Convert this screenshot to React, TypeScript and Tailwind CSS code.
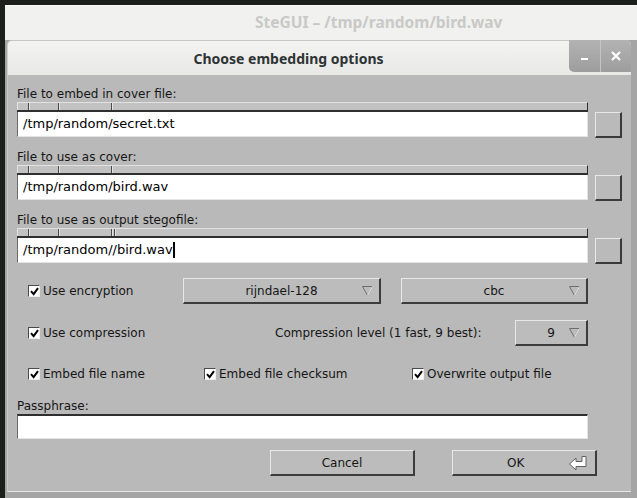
import React from 'react';

const Ruler: React.FC<{ extra?: boolean }> = ({ extra }) => (
  <div className="flex h-[10px] bg-[#c2c2c2] border-t border-t-[#e2e2e2] border-b-2 border-b-[#2f2f2f] border-r border-r-[#2f2f2f]">
    <div className="w-[12px] border-l border-l-[#e2e2e2] border-r border-r-[#4a4a4a]" />
    <div className="w-[30px] border-l border-l-[#e2e2e2] border-r border-r-[#4a4a4a]" />
    <div className="w-[53px] border-l border-l-[#e2e2e2] border-r border-r-[#4a4a4a]" />
    {extra && <div className="w-[3px] border-l border-l-[#e2e2e2] border-r border-r-[#4a4a4a]" />}
    <div className="flex-1 border-l border-l-[#e2e2e2]" />
  </div>
);

const Entry: React.FC<{ value?: string; cursor?: boolean }> = ({ value, cursor }) => (
  <div className="h-[25px] flex items-center bg-white pl-[5px] text-[13px] text-black border-l border-l-[#6a6a6a] border-r border-r-[#e4e4e4] border-b border-b-[#e4e4e4]">
    <span>{value}</span>
    {cursor && <span className="w-[2px] h-[16px] bg-black" />}
  </div>
);

const SquareButton: React.FC = () => (
  <div className="w-[27px] h-[26px] bg-[#bababa] border-t border-l border-t-[#e8e8e8] border-l-[#e8e8e8] border-b-2 border-r-2 border-b-[#3a3a3a] border-r-[#3a3a3a]" />
);

const FileGroup: React.FC<{ label: string; value: string; extra?: boolean; cursor?: boolean }> = ({
  label,
  value,
  extra,
  cursor,
}) => (
  <div className="flex gap-[7px]">
    <div className="w-[571px] flex flex-col">
      <div className="h-[15px] leading-[15px] text-[12px]">{label}</div>
      <Ruler extra={extra} />
      <Entry value={value} cursor={cursor} />
    </div>
    <div className="pt-[25px]">
      <SquareButton />
    </div>
  </div>
);

const Check: React.FC<{ label: string }> = ({ label }) => (
  <div className="flex items-center gap-[3px]">
    <div className="w-[12px] h-[12px] bg-white flex items-center justify-center border-t border-l border-t-[#4a4a4a] border-l-[#4a4a4a] border-b border-r border-b-[#eeeeee] border-r-[#eeeeee]">
      <svg width="9" height="9" viewBox="0 0 9 9">
        <path d="M1 4.2 L3.6 7.2 L8 1.2" stroke="#000" strokeWidth="2" fill="none" />
      </svg>
    </div>
    <span>{label}</span>
  </div>
);

const Triangle: React.FC = () => (
  <svg width="11" height="10" viewBox="0 0 11 10">
    <path d="M0.5 0.5 L10.5 0.5 L5.5 9.5 Z" fill="none" stroke="#6e6e6e" strokeWidth="1" />
    <path d="M10.5 0.5 L5.5 9.5" stroke="#f2f2f2" strokeWidth="1" />
  </svg>
);

const Combo: React.FC<{ value: string; w: string }> = ({ value, w }) => (
  <div
    className={`${w} h-[26px] flex items-center pl-[17px] pr-[6px] bg-[#bcbcbc] border-t border-l border-t-[#e8e8e8] border-l-[#e8e8e8] border-b-2 border-r-2 border-b-[#3c3c3c] border-r-[#3c3c3c]`}
  >
    <span className="flex-1 text-center">{value}</span>
    <Triangle />
  </div>
);

const PushButton: React.FC<{ children: React.ReactNode; className?: string }> = ({ children, className }) => (
  <div
    className={`w-[145px] h-[26px] flex items-center bg-[#bcbcbc] border-t border-l border-t-[#e8e8e8] border-l-[#e8e8e8] border-b-2 border-r-2 border-b-[#3c3c3c] border-r-[#3c3c3c] ${className ?? ''}`}
  >
    {children}
  </div>
);

export default function App() {
  return (
    <div className="w-[637px] h-[498px] overflow-hidden bg-[#1d1f1d] pt-[5px] pl-[5px] font-['DejaVu_Sans',sans-serif] text-[12px] text-[#161616]">
      <div className="h-full flex flex-col bg-[#a5a5a5]">
        {/* main window title */}
        <div className="h-[35px] shrink-0 flex items-center pl-[250px] bg-[#f1f1ef] border-t border-t-[#fbfbfb] font-['Noto_Sans',sans-serif] text-[15.5px] font-bold text-[#c9c9c7]">
          SteGUI – /tmp/random/bird.wav
        </div>

        {/* dialog */}
        <div className="ml-[2px] mr-[6px] flex flex-col">
          <div className="h-[35px] flex rounded-t-[5px] bg-gradient-to-b from-[#f3f3f1] to-[#e8e8e6] border-t border-t-[#c6c6c4] border-l border-l-[#d0d0ce]">
            <div className="flex-1 flex items-center justify-center font-['Noto_Sans',sans-serif] text-[14px] font-bold text-[#2e3436]">
              Choose embedding options
            </div>
            <div className="flex h-[32px] -mt-px rounded-bl-[5px] rounded-tr-[5px] overflow-hidden bg-gradient-to-b from-[#b3b3b3] to-[#9d9d9d]">
              <div className="w-[31px] flex items-center justify-center pt-[6px]">
                <div className="w-[7px] h-[2px] bg-white" />
              </div>
              <div className="w-[31px] flex items-center justify-center border-l border-l-[#c4c4c4]">
                <svg width="10" height="10" viewBox="0 0 10 10">
                  <path d="M1 1 L9 9 M9 1 L1 9" stroke="#fff" strokeWidth="2.2" />
                </svg>
              </div>
            </div>
          </div>

          <div className="flex flex-col bg-[#b9b9b9] pl-[9px] pt-[12px] pb-[15px] border-l border-l-[#c8c8c8] border-b border-b-[#e6e6e6]">
            <div className="flex flex-col gap-[12px]">
              <FileGroup label="File to embed in cover file:" value="/tmp/random/secret.txt" />
              <FileGroup label="File to use as cover:" value="/tmp/random/bird.wav" />
              <FileGroup label="File to use as output stegofile:" value="/tmp/random//bird.wav" extra cursor />
            </div>

            <div className="w-[571px] mt-[14px] h-[26px] flex items-center pl-[11px]">
              <div className="w-[155px]">
                <Check label="Use encryption" />
              </div>
              <Combo value="rijndael-128" w="w-[198px]" />
              <div className="ml-auto">
                <Combo value="cbc" w="w-[187px]" />
              </div>
            </div>

            <div className="w-[571px] mt-[16px] h-[26px] flex items-center pl-[11px]">
              <div className="w-[247px]">
                <Check label="Use compression" />
              </div>
              <span>Compression level (1 fast, 9 best):</span>
              <div className="ml-auto">
                <Combo value="9" w="w-[73px]" />
              </div>
            </div>

            <div className="w-[571px] mt-[15px] h-[26px] flex items-center pl-[11px]">
              <div className="w-[176px]">
                <Check label="Embed file name" />
              </div>
              <div className="w-[208px]">
                <Check label="Embed file checksum" />
              </div>
              <Check label="Overwrite output file" />
            </div>

            <div className="w-[571px] mt-[12px] flex flex-col">
              <div className="h-[15px] leading-[15px]">Passphrase:</div>
              <div className="h-[25px] bg-white border-t-2 border-t-[#2f2f2f] border-l border-l-[#6a6a6a] border-r border-r-[#e4e4e4] border-b border-b-[#e4e4e4]" />
            </div>

            <div className="mt-[11px] flex gap-[37px] pl-[253px]">
              <PushButton className="justify-center">Cancel</PushButton>
              <PushButton className="pl-[54px] pr-[7px]">
                <span>OK</span>
                <svg className="ml-auto" width="20" height="18" viewBox="0 0 20 18">
                  <path
                    d="M1.5 10 L8 4 L8 7.5 L14 7.5 L14 2.5 L18 2.5 L18 12.5 L8 12.5 L8 16 Z"
                    fill="#fff"
                    stroke="#606060"
                    strokeWidth="1"
                  />
                </svg>
              </PushButton>
            </div>
          </div>
        </div>
      </div>
    </div>
  );
}
